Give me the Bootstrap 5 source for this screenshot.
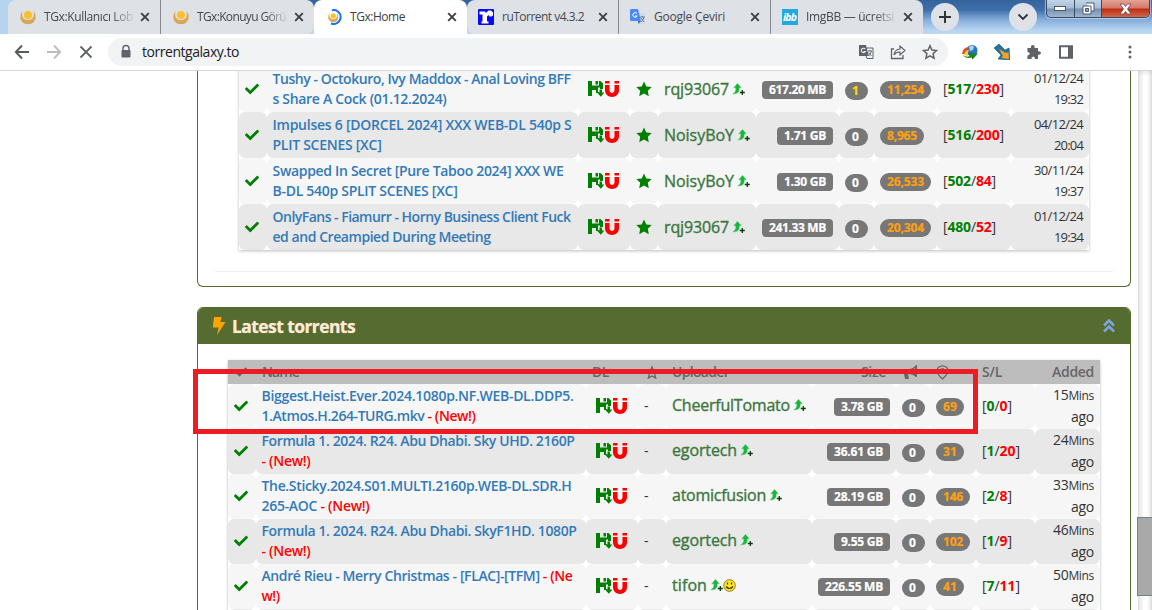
<!DOCTYPE html>
<html lang="tr">
<head>
<meta charset="utf-8">
<meta name="viewport" content="width=device-width, initial-scale=1">
<title>TGx:Home</title>
<link href="https://cdn.jsdelivr.net/npm/bootstrap@5.3.0/dist/css/bootstrap.min.css" rel="stylesheet">
<style>
body{width:1152px;height:610px;overflow:hidden;background:#fff;font-family:"Open Sans","Noto Sans",sans-serif;font-size:14px;line-height:20px;color:#333}
svg{display:block;flex:none}
/* browser frame */
.tabstrip{height:34px;padding-left:8px;background:linear-gradient(90deg,#a9cbea 0,#a9cbea 20px,#3f6ea8 150px,#2f5f9b 950px,transparent 1060px),linear-gradient(#3b6ba8 0,#6a96c8 15px,#b4d2ef 27px,#bcd9f3 34px)}
.tabstrip{background:linear-gradient(90deg,#b4d4f0 0,#b4d4f0 14px,transparent 60px),linear-gradient(#34629c 0,#3f6fab 10px,#86aedb 20px,#b7d4f0 30px,#bcd9f3 34px)}
.tab-item{width:153px;height:34px;background:#dee1e6;padding:0 10px 0 12px;font-size:12px;color:#45494d}
.tab-item.narrow{width:152px}
.tab-item.on{background:#fff;border-radius:8px 8px 0 0;color:#3c4043}
.tab-item.t-first{border-radius:8px 0 0 0}
.tab-item.t-prev{border-radius:0 8px 8px 0}
.tab-item.t-next{border-radius:8px 0 0 8px}
.tab-item.t-mid{padding-left:11px}
.tab-item.t-last{padding-left:11px;border-radius:0 8px 0 0}
.tab-title{width:92px;margin-left:8px;line-height:20px;white-space:nowrap}
.tab-title.fade-end{-webkit-mask-image:linear-gradient(90deg,#000 68px,transparent 92px);mask-image:linear-gradient(90deg,#000 68px,transparent 92px)}
.tab-item.sep{border-right:1px solid #85888d}
.round-btn{width:28px;height:28px;background:#dee1e6;margin-top:3px}
.winctl{margin-left:9px;height:18px;width:104px;border:1px solid #3b4b60;border-top:0;border-radius:0 0 5px 5px;overflow:hidden;background:linear-gradient(#c1d3e7 0,#a8bdd5 8px,#7791b0 9px,#9db6d1 17px);box-shadow:0 0 1px 1px #dceafa99}
.winctl .w1{width:28px;border-right:1px solid #3b4b60}.winctl .w2{width:27px;border-right:1px solid #3b4b60}
.winctl .w3{width:47px;background:linear-gradient(#e3a296 0,#d5796a 8px,#bb2c14 9px,#d2694a 17px)}
.toolbar{height:37px;padding-left:14px;border-bottom:1px solid #d5d7da;color:#5f6368}
.omnibox{width:840px;height:28px;border-radius:14px;background:#f1f3f4;margin-left:14px;padding:0 10px}
.url{font-size:14px;color:#202124;margin-left:8px}
/* page */
.viewport{height:539px;overflow:hidden}
.page-col{width:934px;margin-left:197px}
.panel-box{border:1px solid #556b2f;border-radius:6px;overflow:hidden;background:#fff}
.panel-first{height:216px;border-top:0;border-radius:0 0 6px 6px}
.panel-first .inner{display:flow-root;margin:0 15px;height:201px;border-bottom:1px solid #eee;border-radius:0 0 5px 5px}
.panel-second{height:320px;margin-top:20px;border-radius:6px 6px 0 0}
.panel-head{height:36px;background:#556b2f;color:#faebd7;font-size:17.5px;font-weight:700;padding:0 15px 0 14px;text-shadow:0 0 1px #d8b98a}
.tgrid{box-shadow:0 1px 3px #0004}
.g1{width:850px;margin:-5px 0 0 26px}
.g2{width:872px;margin:16px 0 0 30px}
.trow{display:grid;background:#fff}
.g1 .trow{grid-template-columns:28px 311px 52px 28px 98px 83px 35px 63px 74px 78px;height:46px}
.g2 .trow{grid-template-columns:28px 330px 52px 28px 146px 84px 34px 46px 59px 65px;height:45px}
.trow>div{display:flex;align-items:center;padding:0 6px;background:#f6f6f6;border-radius:6px;white-space:nowrap;min-width:0}
.g2 .trow>div{padding-bottom:2px}
.trow.alt>div{background:#e8e8e8}
.g2 .thead-row{height:24px;background:#bdbdbd;color:#666;font-weight:600}
.g2 .thead-row>div{background:none;padding-bottom:0}
.trow>.c-dl{padding-left:10px}
.trow>.c-badge{padding-top:2px}
.trow>.c-com{padding-top:4px}
.trow>.c-size-head{padding-right:10px}
.c-ok{color:green}
.tname{font-weight:600;color:#337ab7}
.tname>div{margin-left:-.5px}
.new{color:#f00}
.upl{font-size:16px;font-weight:500;color:#3c763d;margin-top:-1px;-webkit-text-stroke:.35px #3c763d}
.tagbox{height:18px;line-height:18px;background:#777;color:#fff;font-size:12px;font-weight:700;border-radius:4px;padding:0 7px;-webkit-text-stroke:.2px}
.tagbox.rd{border-radius:9px}
.tagbox.has{color:#ffd700}
.tagbox.views{color:#ffa012}
.sd{color:green}.lc{color:#f00}
.added{font-size:13px;line-height:21px;text-align:right}
.g2 .added{font-size:14px}.mins{font-size:12px}
.track{width:14px;margin-left:7px;background:linear-gradient(90deg,#e4e4e4,#fff 45%,#fff 65%,#e2e2e2);box-shadow:inset 0 3px 3px #0001}
.thumb{width:16px;height:79px;margin:446px 0 0 -1px;background:#a9a9a9;border:1px solid #708090}
.callout{position:absolute;left:193px;top:369px;width:785px;height:65px;border:5px solid #ed1c24}
</style>
</head>
<body class="position-relative">
<svg width="0" height="0" class="position-absolute">
<defs>
<symbol id="x" viewBox="0 0 10 10"><path d="M1.200 1.200l7.600 7.600M8.800 1.200L1.200 8.800" stroke="#3c4043" stroke-width="1.900"/></symbol>
<symbol id="tgx" viewBox="0 0 16 16"><path d="M2.500 2C-1 6-1 15 8 15S17 6 13.500 2C15 8 12 11 8 11S1 8 2.500 2z" fill="#dfa650"/><circle cx="8" cy="6" r="4" fill="#f9c130"/><path d="M3 13q5 3.500 10 0" stroke="#c9a57a" fill="none"/></symbol>
<symbol id="check" viewBox="0 0 512 512"><path fill="currentColor" d="M173.900 439.400l-166.400-166.400c-10-10-10-26.200 0-36.200l36.200-36.200c10-10 26.200-10 36.200 0L192 312.700 432.100 72.600c10-10 26.200-10 36.200 0l36.200 36.200c10 10 10 26.200 0 36.200l-294.400 294.400c-10 10-26.200 10-36.200 0z"/></symbol>
<symbol id="save" viewBox="0 0 16 16"><path fill="green" d="M0 0h4v4.500h7V0h1.500L15 2.500V8h-3V6.500h-2V11h1v1H8V9H4v6H0z"/><path fill="green" d="M7.500 0H10v3.500H7.500zM11.500 8.500h2.500v3h2.500l-3.700 4.300L9 11.500h2.500z"/></symbol>
<symbol id="mag" viewBox="0 0 14 16"><path fill="red" d="M0 0h4.500v2.500H0zM9.500 0H14v2.500H9.500zM0 4h4.500v5c0 4 5 4 5 0V4H14v5c0 9.300-14 9.300-14 0z"/></symbol>
<symbol id="star" viewBox="0 0 16 16"><path fill="currentColor" d="M8 .5l2.300 4.900 5.400.7-3.900 3.700 1 5.400L8 12.600l-4.800 2.600 1-5.400L.300 6.100l5.400-.7z"/></symbol>
<symbol id="staro" viewBox="0 0 16 16"><path fill="none" stroke="currentColor" stroke-width="1.500" d="M8 1.700l1.900 4.300 4.700.5-3.500 3.100 1 4.600L8 11.900l-4.100 2.300 1-4.600-3.500-3.100 4.700-.5z"/></symbol>
<symbol id="up" viewBox="0 0 13 13"><path d="M5.500.3L9.300 4.800H7.300c.2 3.800-.8 6-6.600 6.200C3.500 9.200 4 7.500 3.700 4.800H1.700z" fill="#19b63c" stroke="#60d080" stroke-width=".4"/><path d="M10.300 7v5M7.800 9.500h5" stroke="#073b07" stroke-width="1.300"/></symbol>
</defs>
</svg>

<header>
<div class="tabstrip d-flex">
  <div class="tab-item sep t-first d-flex align-items-center"><svg width="16" height="16"><use href="#tgx"/></svg><span class="tab-title fade-end"><span data-w="89">TGx:Kullanıcı Lob</span></span><svg width="10" height="10" class="ms-auto"><use href="#x"/></svg></div>
  <div class="tab-item t-prev d-flex align-items-center"><svg width="16" height="16"><use href="#tgx"/></svg><span class="tab-title fade-end"><span data-w="89">TGx:Konuyu Görü</span></span><svg width="10" height="10" class="ms-auto"><use href="#x"/></svg></div>
  <div class="tab-item on d-flex align-items-center"><svg width="16" height="16" viewBox="0 0 16 16"><path d="M6 1.200A7 7 0 1 1 5 14.500" fill="none" stroke="#1a73e8" stroke-width="2"/><g transform="translate(2 3) scale(.66)"><use href="#tgx" width="16" height="16"/></g></svg><span class="tab-title"><span data-w="55">TGx:Home</span></span><svg width="10" height="10" class="ms-auto"><use href="#x"/></svg></div>
  <div class="tab-item narrow sep t-next t-mid d-flex align-items-center"><svg width="16" height="16" viewBox="0 0 16 16"><rect width="16" height="16" rx="1" fill="#0a0af0"/><path fill="#fff" d="M1.500 2.500h5.500l1 1.500 2.500-2.500H13l2 2v3l-1.500 1h-2l-1-1.500-1.500 1.500v5h1.500v2h-7v-2H4.500V5.500h-3z"/></svg><span class="tab-title"><span data-w="82">ruTorrent v4.3.2</span></span><svg width="10" height="10" class="ms-auto"><use href="#x"/></svg></div>
  <div class="tab-item narrow sep t-mid d-flex align-items-center"><svg width="16" height="16" viewBox="0 0 16 16"><path fill="#d5d9de" d="M7 4h8v11H9z"/><path fill="#4c8bf5" d="M0 1q0-1 1-1h7l3 12H1q-1 0-1-1z"/><path fill="#3367d6" d="M8 12h3l-2.500 3z"/><path d="M7 4.500a2.300 2.300 0 1 0 .2 2.500H5" stroke="#fff" fill="none"/><path d="M10 8h5M12.500 7v1M14 8q-1 4-3 5M11 9l3 4" stroke="#6b7f95" fill="none"/></svg><span class="tab-title"><span data-w="71">Google Çeviri</span></span><svg width="10" height="10" class="ms-auto"><use href="#x"/></svg></div>
  <div class="tab-item narrow t-last d-flex align-items-center"><svg width="16" height="16" viewBox="0 0 16 16"><rect width="16" height="16" fill="#23a8e0"/><text x="8" y="12" text-anchor="middle" font-size="10.500" font-weight="700" font-style="italic" fill="#fff" textLength="14">ibb</text></svg><span class="tab-title fade-end"><span data-w="88">ImgBB — ücretsi</span></span><svg width="10" height="10" class="ms-auto"><use href="#x"/></svg></div>
  <div class="round-btn rounded-circle d-flex align-items-center justify-content-center ms-2"><svg width="14" height="14" viewBox="0 0 14 14"><path d="M7 1v12M1 7h12" stroke="#303438" stroke-width="2"/></svg></div>
  <div class="round-btn rounded-circle d-flex align-items-center justify-content-center" style="margin-left:50px"><svg width="12" height="8" viewBox="0 0 12 8"><path d="M1.500 1.500L6 6l4.500-4.500" stroke="#303438" stroke-width="1.800" fill="none"/></svg></div>
  <div class="winctl d-flex">
    <div class="w1 d-flex justify-content-center align-items-center"><svg width="13" height="6" viewBox="0 0 13 6"><rect x=".5" y=".5" width="11" height="4" fill="#fff" stroke="#4a5870"/></svg></div>
    <div class="w2 d-flex justify-content-center align-items-center"><svg width="13" height="13" viewBox="0 0 13 13"><path d="M4 1h8v8h-2M1 4h8v8H1z" fill="#fff" stroke="#4a5870"/><path d="M3.500 6.500h3v3h-3z" fill="#8ba3c0" stroke="#4a5870"/></svg></div>
    <div class="w3 d-flex justify-content-center align-items-center"><svg width="13" height="12" viewBox="0 0 13 12"><path d="M1 1h3.500l2 2.500L8.500 1H12L8.500 6l3.500 5H8.500l-2-2.500L4.500 11H1l3.500-5z" fill="#fff" stroke="#6b4a50" stroke-width=".8"/></svg></div>
  </div>
</div>
<div class="toolbar d-flex align-items-center">
  <svg width="16" height="16" viewBox="0 0 16 16"><path d="M15 8H2M8 1.500L1.800 8 8 14.500" stroke="#55595e" stroke-width="1.900" fill="none"/></svg>
  <svg width="16" height="16" viewBox="0 0 16 16" style="margin-left:16px"><path d="M1 8h13M8 1.500L14.200 8 8 14.500" stroke="#bbbdc0" stroke-width="1.900" fill="none"/></svg>
  <svg width="16" height="16" viewBox="0 0 16 16" class="ms-3"><path d="M2.500 2.500l11 11M13.500 2.500l-11 11" stroke="#5f6368" stroke-width="1.800"/></svg>
  <div class="omnibox d-flex align-items-center">
    <svg width="16" height="16" viewBox="0 0 16 16"><path d="M5 7V4.500a3 3 0 0 1 6 0V7" fill="none" stroke="#5f6368" stroke-width="1.400"/><rect x="3.500" y="6" width="9" height="7.500" rx="1" fill="#5f6368"/></svg>
    <span class="url"><span data-w="97">torrentgalaxy.to</span></span>
    <div class="d-flex gap-3 ms-auto">
      <svg width="16" height="16" viewBox="0 0 16 16"><path fill="#5f6368" d="M1 1h7l2.800 11H1z"/><path d="M8.500 4H15v10.500H9L8 12" fill="none" stroke="#5f6368"/><path d="M7.200 5a2.200 2.200 0 1 0 .2 2.500H5.500" stroke="#f1f3f4" fill="none" stroke-width="1.100"/><path d="M10 7h4M12 6v1M13.500 7q-.8 3.500-3 5M10.500 8.500l3 3.500" stroke="#5f6368" fill="none" stroke-width=".9"/></svg>
      <svg width="16" height="16" viewBox="0 0 16 16"><path d="M4 5H1.500v9.500H13V11" fill="none" stroke="#5f6368" stroke-width="1.300"/><path d="M4 11q.5-5.500 6-6V2l5 4.500-5 4.500V8q-4-.2-6 3z" fill="none" stroke="#5f6368" stroke-width="1.200"/></svg>
      <svg width="16" height="16"><use href="#staro"/></svg>
    </div>
  </div>
  <div class="d-flex gap-3" style="margin-left:14px">
    <svg width="16" height="16" viewBox="0 0 16 16"><circle cx="10" cy="6.500" r="5.500" fill="#2875c9"/><path d="M7 3q3-3 5 0l-1 3-3 1z" fill="#a9d4ee"/><path d="M0 10q1-7 7-7-3 3-3 7z" fill="#e34a22"/><path d="M2 11q1-5 5-5-2 3-1 6z" fill="#ffd32e"/><path d="M1 11q4 3 6.500 1l-1-3 9.500.5-5.500 6-1-2q-6 1.500-8.500-2.500z" fill="#23801f"/></svg>
    <svg width="16" height="16" viewBox="0 0 16 16"><path d="M0 4l5-4 6 6 4-2 1 12-12-1 3-4z" fill="#24749a" stroke="#164f70" stroke-width=".6"/><path d="M5 5l7 4 2.500-1 .5 7-8-1 2-2z" fill="#f7a125"/></svg>
    <svg width="16" height="16" viewBox="0 0 16 16"><path fill="#5f6368" d="M1.500 4H5q-.4-3 1.800-3T8.600 4H12v3.300q3-.3 3 1.700t-3 1.700V15H9q0-2.500-1.800-2.500T5.400 15h-4v-3.500q2.300 0 2.300-1.800T1.400 8z"/></svg>
    <svg width="16" height="16" viewBox="0 0 16 16"><path d="M2 2.200h12v11.600H2z" fill="none" stroke="#5f6368" stroke-width="2"/><path d="M10 2h4v12h-4z" fill="#5f6368"/></svg>
  </div>
  <svg width="4" height="16" viewBox="0 0 4 16" style="margin-left:54px"><g fill="#5f6368"><circle cx="2" cy="3" r="1.500"/><circle cx="2" cy="8" r="1.500"/><circle cx="2" cy="13" r="1.500"/></g></svg>
</div>
</header>

<main class="viewport d-flex">
  <div class="page-col">
    <section class="panel-box panel-first"><div class="inner"><div class="tgrid g1" id="popular"></div></div></section>
    <section class="panel-box panel-second">
      <div class="panel-head d-flex align-items-center">
        <svg width="14" height="18" viewBox="0 0 14 18"><path fill="#ffa500" d="M2 0h7.500L8.300 5H13.500L5 18l1.600-7.500H.8z"/></svg>
        <span style="margin-left:6px"><span data-w="123">Latest torrents</span></span>
        <svg width="12" height="14" viewBox="0 0 12 14" class="ms-auto"><path d="M1 6.500l5-5 5 5M1 12.500l5-5 5 5" fill="none" stroke="#7ea4dc" stroke-width="2.600"/></svg>
      </div>
      <div class="tgrid g2" id="latest">
        <div class="trow thead-row">
          <div><svg width="14" height="12"><use href="#check"/></svg></div><div><span data-w="37">Name</span></div><div><span data-w="17">DL</span></div><div class="justify-content-center"><svg width="14" height="15"><use href="#staro"/></svg></div><div><span data-w="57">Uploader</span></div>
          <div class="c-size-head justify-content-end"><span data-w="25">Size</span></div>
          <div><svg width="16" height="14" viewBox="0 0 16 14"><path fill="#666" d="M0 4h7q4 0 7-4h1v12h-1q-3-3-8-3l1 5H3L2 9H0z"/><path fill="#bdbdbd" d="M8 5q3 0 5-2v6Q11 8 8 8z"/></svg></div>
          <div><svg width="13" height="15" viewBox="0 0 13 15"><path d="M6.500 14Q1 9 1 5.800a5.500 5 0 0 1 11 0Q12 9 6.500 14z" fill="none" stroke="#666" stroke-width="1.200"/><circle cx="6.500" cy="5.500" r="2" fill="none" stroke="#666"/></svg></div>
          <div><span data-w="20">S/L</span></div><div class="justify-content-end"><span data-w="42">Added</span></div>
        </div>
      </div>
    </section>
  </div>
  <div class="track"><div class="thumb"></div></div>
</main>
<div class="callout"></div>

<script src="https://cdn.jsdelivr.net/npm/bootstrap@5.3.0/dist/js/bootstrap.bundle.min.js"></script>
<script>
const NEW = '<span class="new">- (New!)</span>';
// [name lines with widths], uploader, width, size, width, comments, views, width, seeds, leeches, width, added
const popular = [
  [['Tushy - Octokuro, Ivy Maddox - Anal Loving BFF',298,'s Share A Cock (01.12.2024)',174],'rqj93067',65,'617.20 MB',71,1,'11,254',51,517,230,61,'01/12/24','19:32'],
  [['Impulses 6 [DORCEL 2024] XXX WEB-DL 540p S',299,'PLIT SCENES [XC]',109],'NoisyBoY',70,'1.71 GB',56,0,'8,965',44,516,200,61,'04/12/24','20:04'],
  [['Swapped In Secret [Pure Taboo 2024] XXX WE',291,'B-DL 540p SPLIT SCENES [XC]',185],'NoisyBoY',70,'1.30 GB',56,0,'26,533',51,502,84,53,'30/11/24','19:37'],
  [['OnlyFans - Fiamurr - Horny Business Client Fuck',298,'ed and Creampied During Meeting',218],'rqj93067',65,'241.33 MB',71,0,'20,304',51,480,52,53,'01/12/24','19:34']
];
const latest = [
  [['Biggest.Heist.Ever.2024.1080p.NF.WEB-DL.DDP5.',312,'1.Atmos.H.264-TURG.mkv '+NEW,214],'CheerfulTomato',118,'3.78 GB',56,0,'69',28,0,0,30,'15','ago'],
  [['Formula 1. 2024. R24. Abu Dhabi. Sky UHD. 2160P',313,NEW,49],'egortech',65,'36.61 GB',63,0,'31',28,1,20,38,'24','ago'],
  [['The.Sticky.2024.S01.MULTI.2160p.WEB-DL.SDR.H',310,'265-AOC '+NEW,108],'atomicfusion',94,'28.19 GB',63,0,'146',34,2,8,30,'33','ago'],
  [['Formula 1. 2024. R24. Abu Dhabi. SkyF1HD. 1080P',315,NEW,49],'egortech',65,'9.55 GB',56,0,'102',34,1,9,30,'46','ago'],
  [['André Rieu - Merry Christmas - [FLAC]-[TFM] <span class="new">- (Ne</span>',311,'<span class="new">w!)</span>',18],'tifon',35,'226.55 MB',72,0,'41',28,7,11,38,'50','ago'],
  [['',0,'',0],'']
];
const fit = (t, w) => `<span data-w="${w}">${t}</span>`;
const smile = '<svg width="13" height="13" viewBox="0 0 13 13"><circle cx="6.500" cy="6.500" r="5.800" fill="#ffe523" stroke="#7a6200" stroke-width=".8"/><path d="M4.500 3.500v2M8.500 3.500v2M3 7.500q3.500 4 7 0" stroke="#3c3000" fill="none" stroke-width="1.200"/></svg>';
function row(r, i, isTop) {
  const [n, u, uw, size, sw, com, v, vw, s, l, slw, d1, d2] = r;
  const alt = i % 2 ? 'alt' : '';
  if (!u) return `<div class="trow ${alt}">${'<div></div>'.repeat(10)}</div>`;
  return `<div class="trow ${alt}">
  <div class="c-ok"><svg width="14" height="14"><use href="#check"/></svg></div>
  <div class="tname"><div>${fit(n[0], n[1])}<br>${fit(n[2], n[3])}</div></div>
  <div class="c-dl"><svg width="16" height="16"><use href="#save"/></svg><svg width="14" height="16" style="margin-left:1px"><use href="#mag"/></svg></div>
  ${isTop ? '<div class="c-ok"><svg width="16" height="16"><use href="#star"/></svg></div>' : '<div>-</div>'}
  <div><span class="upl">${fit(u, uw)}</span><svg width="13" height="13" style="margin-left:3px"><use href="#up"/></svg>${u === 'tifon' ? smile : ''}</div>
  <div class="c-badge justify-content-end"><span class="tagbox">${fit(size, sw - 14)}</span></div>
  <div class="c-com"><span class="tagbox rd ${com ? 'has' : ''}">${fit(com, 9)}</span></div>
  <div class="c-badge"><span class="tagbox rd views">${fit(v, vw - 14)}</span></div>
  <div><span data-w="${slw}">[<b class="sd">${s}</b>/<b class="lc">${l}</b>]</span></div>
  <div class="added justify-content-end"><div>${isTop ? fit(d1, 49) : fit(d1 + '<span class="mins">Mins</span>', 41)}<br>${fit(d2, isTop ? 29 : 23)}</div></div>
  </div>`;
}
document.getElementById('popular').innerHTML = popular.map((r, i) => row(r, i, true)).join('');
document.getElementById('latest').insertAdjacentHTML('beforeend', latest.map((r, i) => row(r, i, false)).join(''));
document.querySelectorAll('[data-w]').forEach(e => {
  const n = e.textContent.length, w = e.getBoundingClientRect().width;
  if (n) e.style.letterSpacing = ((+e.dataset.w - w) / n).toFixed(3) + 'px';
});
</script>
</body>
</html>
